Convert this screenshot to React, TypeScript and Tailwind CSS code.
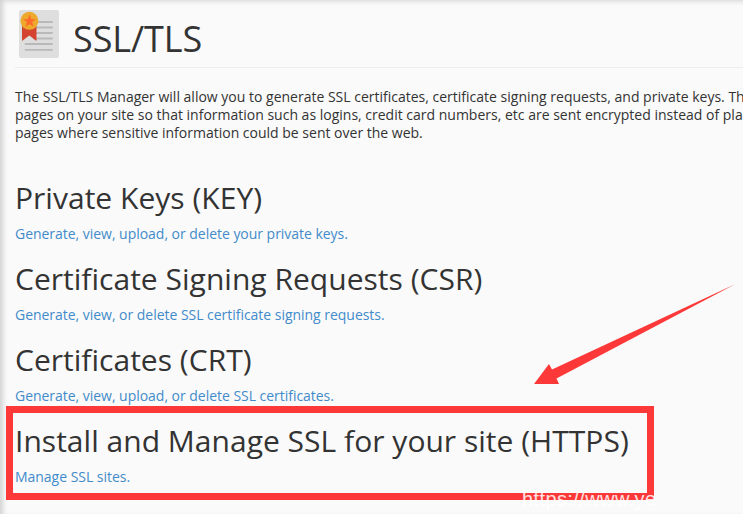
import React from 'react';

interface Section {
  title: string;
  link: string;
}

const sections: Section[] = [
  { title: 'Private Keys (KEY)', link: 'Generate, view, upload, or delete your private keys.' },
  { title: 'Certificate Signing Requests (CSR)', link: 'Generate, view, or delete SSL certificate signing requests.' },
  { title: 'Certificates (CRT)', link: 'Generate, view, upload, or delete SSL certificates.' },
  { title: 'Install and Manage SSL for your site (HTTPS)', link: 'Manage SSL sites.' },
];

const intro = [
  'The SSL/TLS Manager will allow you to generate SSL certificates, certificate signing requests, and private keys. Th',
  'pages on your site so that information such as logins, credit card numbers, etc are sent encrypted instead of pla',
  'pages where sensitive information could be sent over the web.',
];

const CertificateIcon: React.FC = () => (
  <svg width="40" height="48" viewBox="0 0 40 48" className="shrink-0">
    <rect width="40" height="48" rx="2" fill="#dedede" />
    <path d="M15 12H33M17 17.5H33M17 23H33M15 28.5H33M6.5 34H33M6.5 39.8H33" stroke="#b9b9b9" strokeWidth="1.8" strokeLinecap="round" />
    <path d="M3 16H17.5V31L10.3 25.5L3 31Z" fill="#d3432f" />
    <circle cx="10.4" cy="10.8" r="9" fill="#eda92b" />
    <path d="M10.5 4.5L12.2 9L16.8 9.2L13.2 12.1L14.5 16.8L10.5 14.2L6.5 16.8L7.8 12.1L4.2 9.2L8.8 9Z" fill="#ff6b2b" />
  </svg>
);

export default function App() {
  return (
    <div className="relative h-[514px] w-[743px] overflow-hidden bg-[#fafafa] font-['Open_Sans','Noto_Sans',sans-serif] text-[#333333] shadow-[inset_4px_2px_5px_-1px_#d2d2d2]">
      <header className="ml-[15px] flex h-[68px] items-start border-b border-[#eeeeee] pt-[10px] pl-1">
        <CertificateIcon />
        <h1 className="ml-[14px] pt-[9px] text-[36px] leading-[40px] font-normal tracking-[-0.1px]">SSL/TLS</h1>
      </header>

      <div className="mt-5 ml-[15px] text-[14px] leading-[18px] whitespace-nowrap">
        {intro.map((line) => (
          <p key={line}>{line}</p>
        ))}
      </div>

      <main className="mt-[39px] ml-[15px] whitespace-nowrap">
        {sections.map((section) => (
          <section key={section.title} className="h-[81px]">
            <h2 className="text-[30px] leading-[33px] font-normal tracking-[0.02px]">{section.title}</h2>
            <a href="#" className="mt-[11px] block w-max text-[14px] leading-[18px] tracking-[-0.03px] text-[#428bca]">{section.link}</a>
          </section>
        ))}
      </main>

      {/* highlight around the HTTPS section */}
      <div className="absolute top-[406px] left-[6px] h-[94px] w-[648px] border-[7px] border-[#fd3838]" />
      <svg className="absolute top-[270px] left-[500px]" width="243" height="130" viewBox="0 0 243 130">
        <path d="M235.5 14L52 99.5L49 94L34 114H59L56.5 108.5Z" fill="#fd3838" />
      </svg>
      <div className="absolute top-[488px] left-[522px] font-['Liberation_Sans',sans-serif] text-[20px] leading-[23px] tracking-[0.4px] whitespace-nowrap text-white/85">
        https://www.ye
      </div>
    </div>
  );
}
